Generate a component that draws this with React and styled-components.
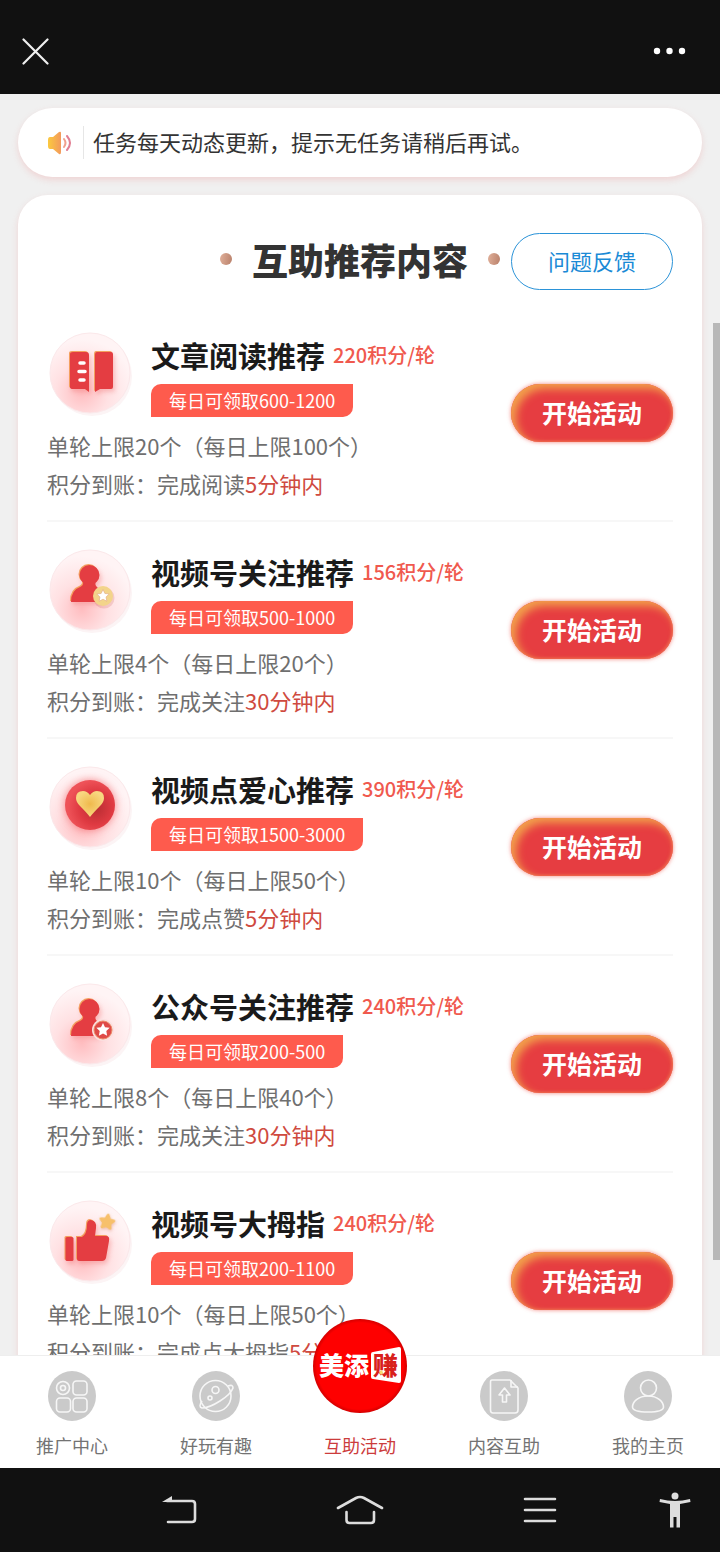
import styled, { createGlobalStyle, css } from "styled-components";

const GlobalStyle = createGlobalStyle`
  * {
    box-sizing: border-box;
  }

  body {
    margin: 0;
    background: #f0f0f0;
    font-family: "Noto Sans CJK SC", sans-serif;
    color: #666;
  }

  button {
    padding: 0;
    border: 0;
    background: none;
    font-family: inherit;
    cursor: pointer;
  }

  a {
    color: inherit;
    text-decoration: none;
  }

  svg {
    display: block;
  }
`;

const Page = styled.div`
  display: flex;
  flex-direction: column;
  height: 100vh;
`;

const TopBar = styled.header`
  display: flex;
  align-items: center;
  justify-content: space-between;
  flex: none;
  height: 94px;
  padding: 8px 33px 0 22px;
  background: #111;
`;

const Content = styled.main`
  position: relative;
  flex: 1;
  min-height: 0;
  overflow: hidden;
  padding: 14px 18px 0;
`;

const ScrollThumb = styled.div`
  position: absolute;
  top: 229px;
  right: 0;
  width: 7px;
  height: 937px;
  background: #b8b8b8;
`;

const Notice = styled.div`
  display: flex;
  align-items: center;
  height: 69px;
  padding: 0 29px;
  border-radius: 35px;
  background: #fff;
  box-shadow: 0 3px 6px rgba(240, 150, 150, 0.3);
`;

const NoticeText = styled.p`
  margin: 0 0 0 11px;
  padding: 0 0 3px 9px;
  border-left: 1px solid #e6e6e6;
  font-size: 22px;
  line-height: 30px;
  color: #333;
`;

const Card = styled.section`
  margin-top: 18px;
  padding: 38px 29px 0;
  border-radius: 30px;
  background: #fff;
  box-shadow: 0 3px 6px rgba(240, 150, 150, 0.3);
`;

const CardHeader = styled.div`
  display: grid;
  grid-template-columns: 1fr auto 1fr;
  align-items: start;
  padding-bottom: 15px;
`;

const CardTitle = styled.h1`
  display: flex;
  grid-column: 2;
  align-items: center;
  gap: 20px;
  margin: 0;
  font-size: 36px;
  font-weight: 900;
  line-height: 52px;
  color: #333;

  &::before,
  &::after {
    content: "";
    width: 12px;
    height: 12px;
    border-radius: 50%;
    background: linear-gradient(100deg, #e0b09a, #b9806a);
  }
`;

const FeedbackButton = styled.button`
  justify-self: end;
  width: 162px;
  height: 57px;
  padding-bottom: 3px;
  border: 1px solid #2b93d8;
  border-radius: 29px;
  font-size: 22px;
  color: #1a8ad6;
`;

const TaskList = styled.ul`
  margin: 0;
  padding: 0;
  list-style: none;
`;

const TaskRow = styled.li`
  display: flex;
  align-items: center;
  justify-content: space-between;
  padding: 16px 0;
  border-bottom: 2px solid #f7f7f7;
`;

const TaskInfo = styled.div`
  padding: 9px 0 2px;
`;

const TaskHead = styled.div`
  display: flex;
  gap: 18px;
  margin-bottom: 9px;
`;

const Medallion = styled.div`
  width: 86px;
  height: 87px;

  svg {
    overflow: visible;
  }
`;

const Glyph = styled.g`
  fill: #e43d42;
  filter: drop-shadow(-1px -1px 0 #f3a05f)
    drop-shadow(2px 3px 2px rgba(235, 90, 90, 0.3));
`;

const TaskTitleLine = styled.div`
  display: flex;
  align-items: center;
  gap: 8px;
  margin-bottom: 4px;
  line-height: 50px;
`;

const TaskTitle = styled.h2`
  margin: 0;
  font-size: 29px;
  font-weight: 700;
  color: #1a1a1a;
`;

const Rate = styled.span`
  font-size: 20px;
  font-weight: 500;
  color: #f0594e;
`;

const Badge = styled.span`
  display: inline-block;
  height: 33px;
  padding: 0 18px;
  border-radius: 10px 0;
  background: #fe5b4d;
  font-size: 18px;
  line-height: 33px;
  color: #fff;
  vertical-align: top;
`;

const TaskText = styled.p`
  margin: 0;
  font-size: 22px;
  line-height: 38px;
  color: #6f6f6f;

  em {
    font-style: normal;
    color: #cf4a40;
  }
`;

const StartButton = styled.button`
  flex: none;
  width: 162px;
  height: 58px;
  padding-bottom: 2px;
  border-radius: 29px;
  background: #e63d41;
  box-shadow:
    inset 5px 5px 9px #f2a04c,
    inset -1px -1px 3px #ee6a50,
    0 0 4px rgba(240, 80, 70, 0.7);
  font-size: 25px;
  font-weight: 700;
  color: #fff;
`;

const TabBar = styled.nav`
  display: grid;
  grid-template-columns: repeat(5, 1fr);
  flex: none;
  position: relative;
  height: 113px;
  border-top: 1px solid #eee;
  background: #fff;
`;

const Tab = styled.a`
  display: flex;
  flex-direction: column;
  align-items: center;
  gap: 10px;
  padding-top: 15px;
  font-size: 18px;
  line-height: 28px;
  color: ${(p) => (p.$active ? "#cc3c3c" : "#737373")};
`;

const TabIcon = styled.span`
  position: relative;
  width: 48px;
  height: 50px;

  ${(p) =>
    !p.$plain &&
    css`
      border-radius: 50%;
      background: #cacaca;
    `}
`;

// hangs over the top edge of the tab bar
const Logo = styled.svg`
  position: absolute;
  left: -23px;
  top: -52px;
`;

const LogoText = styled.text`
  font-size: 25px;
  font-weight: 900;
`;

const SystemBar = styled.footer`
  display: grid;
  grid-template-columns: 2fr 2fr 2fr 1fr;
  align-items: center;
  justify-items: center;
  flex: none;
  height: 84px;
  padding-left: 12.5%;
  background: #111;
`;

const STAR =
  "M0 -10 L2.9 -3.9 L9.5 -3.1 L4.7 1.5 L5.9 8.1 L0 4.9 L-5.9 8.1 L-4.7 1.5 L-9.5 -3.1 L-2.9 -3.9Z";

const Book = () => (
  <>
    <Glyph>
      <path d="M26 22H39Q42 22 42 25V62L38 59H26Q23 59 23 57V24Q23 22 26 22Z" />
      <path d="M50 22H64Q66 22 66 24V57Q66 59 64 59H53L48 62V25Q48 22 50 22Z" />
    </Glyph>
    <path
      d="M33 33H37M32 41.500H38M33 50H37"
      stroke="#fff"
      strokeWidth="3.500"
      strokeLinecap="round"
    />
  </>
);

const PersonShape = () => (
  <Glyph>
    <circle cx="42.500" cy="28" r="10" />
    <path d="M36 33H49Q47 38 51 41L53 55H24Q24 43 34 39.500Q37 38 36 33Z" />
  </Glyph>
);

const PersonGold = () => (
  <>
    <PersonShape />
    <circle cx="57" cy="51" r="10.500" fill="rgba(200,90,80,0.2)" />
    <circle cx="56" cy="49" r="10" fill="#f3d48a" />
    <path d={STAR} transform="translate(56 49) scale(.65)" fill="#fff" stroke="#e3ad86" />
  </>
);

const PersonRed = () => (
  <>
    <PersonShape />
    <circle cx="56" cy="49" r="11" fill="#fbe0e0" />
    <circle cx="56" cy="49" r="9" fill="#df4a48" stroke="#ec8a68" />
    <path d={STAR} transform="translate(56 49) scale(.7)" fill="#fff" />
  </>
);

const Heart = () => (
  <>
    <defs>
      <radialGradient id="heartDisc" cx="0.62" cy="0.56" r="0.56">
        <stop offset="0" stopColor="#b92d32" />
        <stop offset="0.6" stopColor="#df3a42" />
        <stop offset="1" stopColor="#ee5258" />
      </radialGradient>
      <radialGradient id="heartGold">
        <stop offset="0" stopColor="#efb94c" />
        <stop offset="1" stopColor="#f8d780" />
      </radialGradient>
    </defs>
    <circle
      cx="43"
      cy="41"
      r="25"
      fill="url(#heartDisc)"
      style={{ filter: "drop-shadow(0 0 4px rgba(240,90,95,.7))" }}
    />
    <path
      d="M43 53Q40 49 33 42Q29 38 29 34Q29 27 36 27Q40 27 43 31Q46 27 50 27Q57 27 57 34Q57 38 53 42Q46 49 43 53Z"
      fill="url(#heartGold)"
    />
  </>
);

const Thumb = () => (
  <>
    <Glyph>
      <rect x="18.500" y="39" width="8" height="24" rx="1.500" />
      <path d="M30 39H35Q40 36 40 27Q40 22 44 22Q50 23 49 30L48 38H59Q63 38 62 43L59 60Q58 63 55 63H32Q30 63 30 61Z" />
    </Glyph>
    <path
      d={STAR}
      transform="translate(60 24) rotate(10) scale(.7)"
      fill="#f7c06b"
      stroke="#f7c06b"
      strokeWidth="4"
      strokeLinejoin="round"
      style={{ filter: "drop-shadow(1px 2px 2px rgba(220,140,110,.5))" }}
    />
  </>
);

const MedallionIcon = ({ id, children }) => (
  <Medallion>
    <svg width="86" height="87" viewBox="0 0 86 87" fill="none">
      <defs>
        <radialGradient id={id} cx="0.4" cy="0.74" r="0.66">
          <stop offset="0" stopColor="#ffbdc0" />
          <stop offset="0.5" stopColor="#ffe1e3" />
          <stop offset="1" stopColor="#fff4f5" />
        </radialGradient>
      </defs>
      <circle cx="45" cy="46" r="40" fill="#fcf4f5" />
      <circle cx="43" cy="43" r="40" fill={`url(#${id})`} stroke="#fbe8ea" />
      {children}
    </svg>
  </Medallion>
);

const tasks = [
  {
    icon: Book,
    title: "文章阅读推荐",
    rate: "220积分/轮",
    daily: "每日可领取600-1200",
    limit: "单轮上限20个（每日上限100个）",
    action: "完成阅读",
    time: "5分钟内",
  },
  {
    icon: PersonGold,
    title: "视频号关注推荐",
    rate: "156积分/轮",
    daily: "每日可领取500-1000",
    limit: "单轮上限4个（每日上限20个）",
    action: "完成关注",
    time: "30分钟内",
  },
  {
    icon: Heart,
    title: "视频点爱心推荐",
    rate: "390积分/轮",
    daily: "每日可领取1500-3000",
    limit: "单轮上限10个（每日上限50个）",
    action: "完成点赞",
    time: "5分钟内",
  },
  {
    icon: PersonRed,
    title: "公众号关注推荐",
    rate: "240积分/轮",
    daily: "每日可领取200-500",
    limit: "单轮上限8个（每日上限40个）",
    action: "完成关注",
    time: "30分钟内",
  },
  {
    icon: Thumb,
    title: "视频号大拇指",
    rate: "240积分/轮",
    daily: "每日可领取200-1100",
    limit: "单轮上限10个（每日上限50个）",
    action: "完成点大拇指",
    time: "5分钟内",
  },
];

const Task = ({ task, index }) => {
  const Icon = task.icon;
  return (
    <TaskRow>
      <TaskInfo>
        <TaskHead>
          <MedallionIcon id={`medallion${index}`}>
            <Icon />
          </MedallionIcon>
          <div>
            <TaskTitleLine>
              <TaskTitle>{task.title}</TaskTitle>
              <Rate>{task.rate}</Rate>
            </TaskTitleLine>
            <Badge>{task.daily}</Badge>
          </div>
        </TaskHead>
        <TaskText>{task.limit}</TaskText>
        <TaskText>
          积分到账：{task.action}
          <em>{task.time}</em>
        </TaskText>
      </TaskInfo>
      <StartButton type="button">开始活动</StartButton>
    </TaskRow>
  );
};

const TabSvg = ({ children }) => (
  <svg
    width="48"
    height="50"
    viewBox="0 0 48 50"
    fill="none"
    stroke="#f6f6f6"
    strokeWidth="1.600"
    strokeLinejoin="round"
  >
    {children}
  </svg>
);

const GridIcon = () => (
  <TabSvg>
    <circle cx="15" cy="17" r="6.500" />
    <circle cx="15" cy="17" r="2.500" />
    <rect x="25" y="10" width="14" height="14" rx="3.500" />
    <rect x="8.500" y="27" width="14" height="14" rx="3.500" />
    <rect x="25" y="27" width="14" height="14" rx="3.500" />
  </TabSvg>
);

const PlanetIcon = () => (
  <TabSvg>
    <circle cx="23.500" cy="25" r="15.500" />
    <circle cx="23.500" cy="19" r="3.500" />
    <circle cx="18" cy="27" r="2" />
    <path d="M36 15Q41 13 41 17Q39 23 28 30Q17 37 10 37Q6 36 10 30" />
  </TabSvg>
);

const UploadIcon = () => (
  <TabSvg>
    <path d="M12 9H30L38 17V39Q38 42 35 42H13Q10.500 42 10.500 39V11Q10.500 9 12 9Z" />
    <path d="M31 9V16H38" />
    <path d="M24.500 17L30 24H26.500V31H22.500V24H19Z" />
  </TabSvg>
);

const UserIcon = () => (
  <TabSvg>
    <circle cx="24.500" cy="17" r="8" />
    <path d="M24 25C34 25 39.500 31 39.500 36C39.500 39 34 41 24 41S8.500 39 8.500 36C8.500 31 14 25 24 25Z" />
  </TabSvg>
);

const LogoIcon = () => (
  <Logo width="94" height="94" viewBox="0 0 94 94">
    <defs>
      <radialGradient id="logoRed">
        <stop offset="0.92" stopColor="#fe0000" />
        <stop offset="1" stopColor="#d40000" />
      </radialGradient>
    </defs>
    <circle cx="47" cy="47" r="47" fill="url(#logoRed)" />
    <path
      d="M60 33L86 28Q88 28 88 30V62Q88 64 86 64L60 60Q58 60 58 58V35Q58 33 60 33Z"
      fill="#fff"
    />
    <LogoText x="6" y="56" fill="#fff">
      美添
    </LogoText>
    <LogoText x="60" y="56" fill="#d8201c">
      赚
    </LogoText>
    <path d="M66 53L69 51L70 54L68 56Z" fill="#f7dc6f" />
  </Logo>
);

const tabs = [
  { label: "推广中心", icon: GridIcon },
  { label: "好玩有趣", icon: PlanetIcon },
  { label: "互助活动", icon: LogoIcon, active: true },
  { label: "内容互助", icon: UploadIcon },
  { label: "我的主页", icon: UserIcon },
];

const App = () => (
  <Page>
    <GlobalStyle />
    <TopBar>
      <button type="button" aria-label="关闭">
        <svg width="27" height="27" viewBox="0 0 27 27" stroke="#f0f0f0" strokeWidth="2.200">
          <path d="M1.500 1.500L25.500 25.500M25.500 1.500L1.500 25.500" strokeLinecap="round" />
        </svg>
      </button>
      <button type="button" aria-label="更多">
        <svg width="34" height="8" viewBox="0 0 34 8" fill="#fff">
          <circle cx="4" cy="4" r="3.200" />
          <circle cx="16.500" cy="4" r="3.200" />
          <circle cx="29" cy="4" r="3.200" />
        </svg>
      </button>
    </TopBar>

    <Content>
      <Notice>
        <svg width="25" height="26" viewBox="0 0 25 26" fill="none">
          <defs>
            <linearGradient id="horn">
              <stop offset="0" stopColor="#fbc93f" />
              <stop offset="1" stopColor="#f39a5c" />
            </linearGradient>
          </defs>
          <path
            d="M3 7H6L12 2Q14 1 14 3V22Q14 25 12 24L6 19H3Q1 19 1 16V10Q1 7 3 7Z"
            fill="url(#horn)"
          />
          <path d="M17 9Q20 13 17 17" stroke="#f0a08c" strokeWidth="2" strokeLinecap="round" />
          <path d="M20 6Q26 13 20 20" stroke="#e27f93" strokeWidth="2" strokeLinecap="round" />
        </svg>
        <NoticeText>任务每天动态更新，提示无任务请稍后再试。</NoticeText>
      </Notice>

      <Card>
        <CardHeader>
          <CardTitle>互助推荐内容</CardTitle>
          <FeedbackButton type="button">问题反馈</FeedbackButton>
        </CardHeader>
        <TaskList>
          {tasks.map((task, i) => (
            <Task task={task} index={i} key={task.title} />
          ))}
        </TaskList>
      </Card>
      <ScrollThumb />
    </Content>

    <TabBar>
      {tabs.map(({ label, icon: Icon, active }) => (
        <Tab href="#" key={label} $active={active}>
          <TabIcon $plain={active}>
            <Icon />
          </TabIcon>
          {label}
        </Tab>
      ))}
    </TabBar>

    <SystemBar>
      <button type="button" aria-label="返回">
        <svg width="36" height="30" viewBox="0 0 36 30" fill="none" stroke="#ddd" strokeWidth="2.600">
          <path d="M5 6H30Q33 6 33 9V24Q33 27 30 27H6" strokeLinecap="round" />
          <path d="M0 7L10 1V7Z" fill="#ddd" stroke="none" />
        </svg>
      </button>
      <button type="button" aria-label="主屏幕">
        <svg
          width="48"
          height="30"
          viewBox="0 0 48 30"
          fill="none"
          stroke="#ddd"
          strokeWidth="2.600"
          strokeLinecap="round"
        >
          <path d="M2 13L20 3Q24 1 28 3L46 13" />
          <path d="M10.500 17V25Q10.500 28 13.500 28H35Q38 28 38 25V17" />
        </svg>
      </button>
      <button type="button" aria-label="最近任务">
        <svg width="34" height="26" viewBox="0 0 34 26" stroke="#ddd" strokeWidth="2.600" strokeLinecap="round">
          <path d="M2 2H32M2 13H32M2 24H32" />
        </svg>
      </button>
      <button type="button" aria-label="无障碍">
        <svg width="32" height="36" viewBox="0 0 32 36" fill="#ddd">
          <circle cx="16" cy="4" r="3.500" />
          <path d="M1 7Q16 11 31 7L31.500 10L21 12V35.500H17.500V25H14.500V35.500H11V12L0.500 10Z" />
        </svg>
      </button>
    </SystemBar>
  </Page>
);

export default App;
